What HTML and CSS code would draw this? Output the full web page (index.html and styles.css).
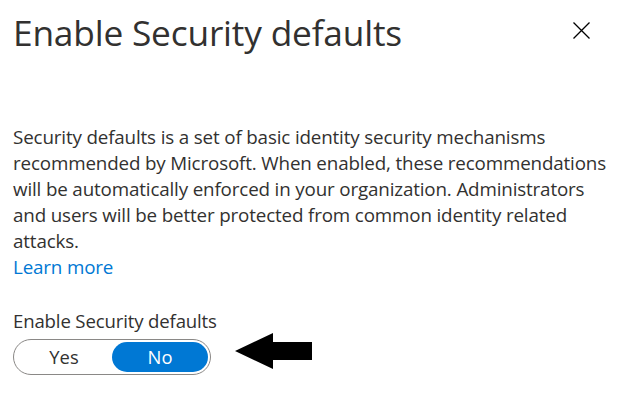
FILE: index.html
```html
<!DOCTYPE html>
<html>
<head>
<meta charset="utf-8">
<link rel="stylesheet" href="styles.css">
</head>
<body>
<div class="panel">
  <div class="header">
    <h1 class="title">Enable Security defaults</h1>
    <button class="close" aria-label="Close">
      <svg width="17" height="17" viewBox="0 0 17 17"><path d="M0.5 0.5 L16.5 16.5 M16.5 0.5 L0.5 16.5" stroke="#000" stroke-width="1.3" fill="none"/></svg>
    </button>
  </div>
  <p class="desc">Security defaults is a set of basic identity security mechanisms recommended by Microsoft. When enabled, these recommendations will be automatically enforced in your organization. Administrators and users will be better protected from common identity related attacks.<br><a class="link" href="#">Learn more</a></p>
  <div class="field">
    <div class="label">Enable Security defaults</div>
    <div class="row">
      <div class="toggle">
        <span class="opt">Yes</span>
        <span class="opt active">No</span>
      </div>
      <svg class="arrow" width="78" height="37" viewBox="0 0 78 37"><polygon points="0,18 38,0 38,9 77,9 77,27 38,27 38,36" fill="#000"/></svg>
    </div>
  </div>
</div>
</body>
</html>
```
FILE: styles.css
```css
html, body {
  margin: 0;
  padding: 0;
  background: #fff;
}
body {
  font-family: "Open Sans", "Noto Sans", sans-serif;
  color: #323130;
}
.panel {
  padding: 0 0 0 13px;
  width: 615px;
}
.header {
  display: flex;
  justify-content: space-between;
  align-items: flex-start;
  padding-right: 38px;
}
.title {
  margin: 8px 0 0 0;
  font-size: 35.3px;
  font-weight: 400;
  line-height: 48px;
  letter-spacing: -0.2px;
}
.close {
  background: none;
  border: 0;
  padding: 0;
  margin-top: 22px;
  width: 17px;
  height: 17px;
  display: block;
}
.close svg { display: block; }
.desc {
  margin: 68px 0 0 0;
  font-size: 18.8px;
  line-height: 26px;
  letter-spacing: -0.15px;
  width: 598px;
}
.link {
  color: #0078d4;
  text-decoration: none;
}
.field {
  margin-top: 29px;
}
.label {
  font-size: 18.6px;
  line-height: 24px;
  letter-spacing: -0.15px;
}
.row {
  display: flex;
  align-items: center;
  gap: 24px;
  margin-top: 0;
}
.toggle {
  display: flex;
  width: 192px;
  height: 30px;
  padding: 2px;
  border: 1px solid #8a8886;
  border-radius: 19px;
  box-sizing: content-box;
}
.opt {
  flex: 1;
  display: flex;
  align-items: center;
  justify-content: center;
  font-size: 18.4px;
  border-radius: 16px;
  color: #323130;
}
.opt.active {
  background: #0078d4;
  color: #fff;
}
.arrow {
  display: block;
  margin-bottom: 10px;
}
```
